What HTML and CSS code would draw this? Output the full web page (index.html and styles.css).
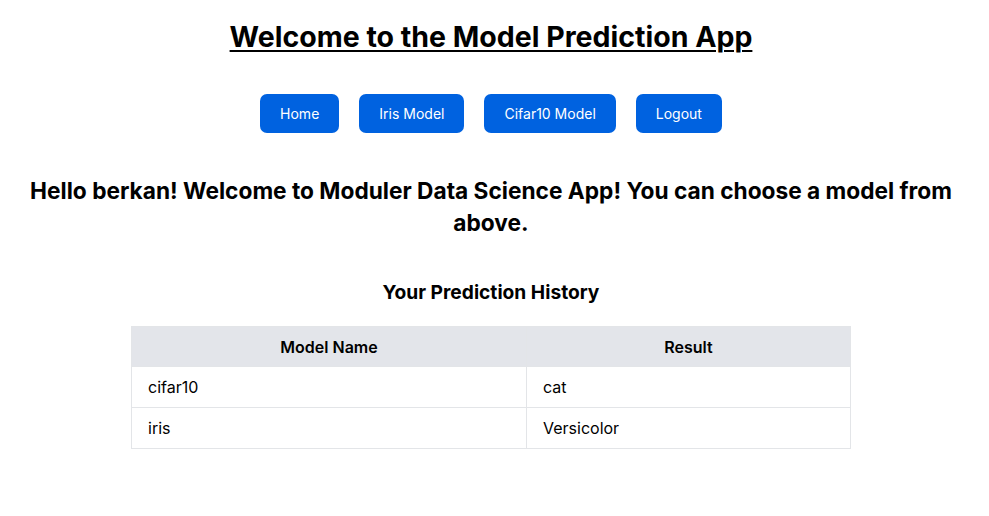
FILE: index.html
```html
<!DOCTYPE html>
<html lang="en">
<head>
<meta charset="utf-8">
<title>Model Prediction App</title>
<link rel="stylesheet" href="styles.css">
</head>
<body>
<main class="page">
  <h1 class="title">Welcome to the Model Prediction App</h1>
  <nav class="nav">
    <a class="btn" href="#">Home</a>
    <a class="btn" href="#">Iris Model</a>
    <a class="btn" href="#">Cifar10 Model</a>
    <a class="btn" href="#">Logout</a>
  </nav>
  <h2 class="greeting">Hello berkan! Welcome to Moduler Data Science App! You can choose a model from above.</h2>
  <h3 class="history-title">Your Prediction History</h3>
  <table class="history">
    <thead>
      <tr><th class="col-model">Model Name</th><th>Result</th></tr>
    </thead>
    <tbody>
      <tr><td>cifar10</td><td>cat</td></tr>
      <tr><td>iris</td><td>Versicolor</td></tr>
    </tbody>
  </table>
</main>
</body>
</html>
```

FILE: styles.css
```css
* { box-sizing: border-box; }
html, body { margin: 0; padding: 0; background: #ffffff; }
body {
  font-family: Inter, "Noto Sans", "Liberation Sans", sans-serif;
  color: #000;
}
.page {
  display: flex;
  flex-direction: column;
  align-items: center;
  padding: 19px 27px 0 20px;
}
.title {
  margin: 0;
  font-size: 28.5px;
  line-height: 36px;
  font-weight: 700;
  text-decoration: underline;
  text-underline-offset: 3px;
  text-decoration-thickness: 2px;
}
.nav {
  display: flex;
  gap: 20px;
  margin-top: 39px;
}
.btn {
  display: block;
  height: 39px;
  line-height: 39px;
  padding: 0 20px;
  border-radius: 7px;
  background: #0062e0;
  color: #fff;
  font-size: 14px;
  text-decoration: none;
}
.greeting {
  margin: 42px 0 0;
  font-size: 22.7px;
  line-height: 32px;
  font-weight: 700;
  text-align: center;
  max-width: 940px;
}
.history-title {
  margin: 39px 0 0;
  font-size: 19.2px;
  line-height: 28px;
  font-weight: 700;
}
.history {
  margin-top: 20px;
  width: 720px;
  border-collapse: collapse;
  font-size: 16px;
}
.history th,
.history td {
  height: 41px;
  padding: 0 16px;
  border: 1px solid #e3e5e8;
}
.history th {
  height: 40px;
  background: #e3e5ea;
  font-weight: 600;
  text-align: center;
}
.history td { text-align: left; }
.col-model { width: 395px; }
```
